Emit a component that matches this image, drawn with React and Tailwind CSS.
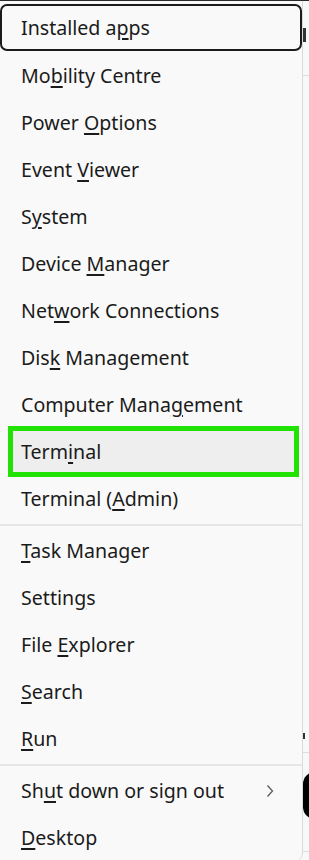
import React from "react";

const F = { fontFamily: '"Noto Sans", "Open Sans", sans-serif' };

function Label({ pre, u, post }) {
  return (
    <span>
      {pre}
      <span className="underline decoration-[1.5px] underline-offset-[3px]">{u}</span>
      {post}
    </span>
  );
}

const groups = [
  [
    ["Installed a", "p", "ps", "focus"],
    ["Mo", "b", "ility Centre"],
    ["Power ", "O", "ptions"],
    ["Event ", "V", "iewer"],
    ["S", "y", "stem"],
    ["Device ", "M", "anager"],
    ["Net", "w", "ork Connections"],
    ["Dis", "k", " Management"],
    ["Computer Mana", "g", "ement"],
    ["Term", "i", "nal", "green"],
    ["Terminal (", "A", "dmin)"],
  ],
  [
    ["", "T", "ask Manager"],
    ["Settin", "g", "s"],
    ["File ", "E", "xplorer"],
    ["", "S", "earch"],
    ["", "R", "un"],
  ],
  [
    ["Sh", "u", "t down or sign out", "sub"],
    ["", "D", "esktop"],
  ],
];

function Row({ item }) {
  const [pre, u, post, kind] = item;
  if (kind === "focus") {
    return (
      <div className="h-[47px] -mt-[1px] mb-[1px] flex items-center pl-[19px] border-2 border-[#1b1b1b] rounded-[7px]">
        <Label pre={pre} u={u} post={post} />
      </div>
    );
  }
  if (kind === "green") {
    return (
      <div className="h-[51px] -my-[2px] ml-[8px] mr-[3px] flex items-center pl-[8px] border-[5px] border-[#22e204] bg-[#eeeeee]">
        <Label pre={pre} u={u} post={post} />
      </div>
    );
  }
  return (
    <div className="h-[47px] flex items-center pl-[21px] pr-[28px] justify-between">
      <Label pre={pre} u={u} post={post} />
      {kind === "sub" && (
        <svg width="8" height="14" viewBox="0 0 8 14" className="text-[#5c5c5c]">
          <path d="M1.5 1.5 L6.5 7 L1.5 12.5" fill="none" stroke="currentColor" strokeWidth="1.3" />
        </svg>
      )}
    </div>
  );
}

export default function App() {
  return (
    <div className="w-[309px] h-[860px] overflow-hidden flex bg-[#f8f8f8] border-t border-[#2a2a2a]" style={F}>
      <div className="w-[303px] shrink-0 h-[860px] bg-[#f9f9f9] border-r border-[#dadada] rounded-br-[8px] pt-[4px] text-[19.6px] text-[#1b1b1b] flex flex-col">
        {groups.map((g, gi) => (
          <React.Fragment key={gi}>
            {gi > 0 && (
              <div className="h-[5px] flex items-center">
                <div className="h-[2px] w-full bg-[#e6e6e6]" />
              </div>
            )}
            {g.map((item, i) => (
              <Row key={i} item={item} />
            ))}
          </React.Fragment>
        ))}
      </div>
      <div className="flex-1 flex flex-col bg-[#f8f8f8]">
        <div className="h-[27px]" />
        <div className="h-[14px] w-[3px] bg-[#333]" />
        <div className="h-[33px]" />
        <div className="h-[1px] bg-[#dedede]" />
        <div className="h-[657px]" />
        <div className="h-[6px] w-[2px] bg-[#333]" />
        <div className="h-[13px]" />
        <div className="h-[1px] bg-[#dedede]" />
        <div className="h-[19px]" />
        <div className="h-[47px] w-[12px] bg-black rounded-l-full" />
        <div className="h-[32px]" />
        <div className="h-[1px] bg-[#dedede]" />
      </div>
    </div>
  );
}
